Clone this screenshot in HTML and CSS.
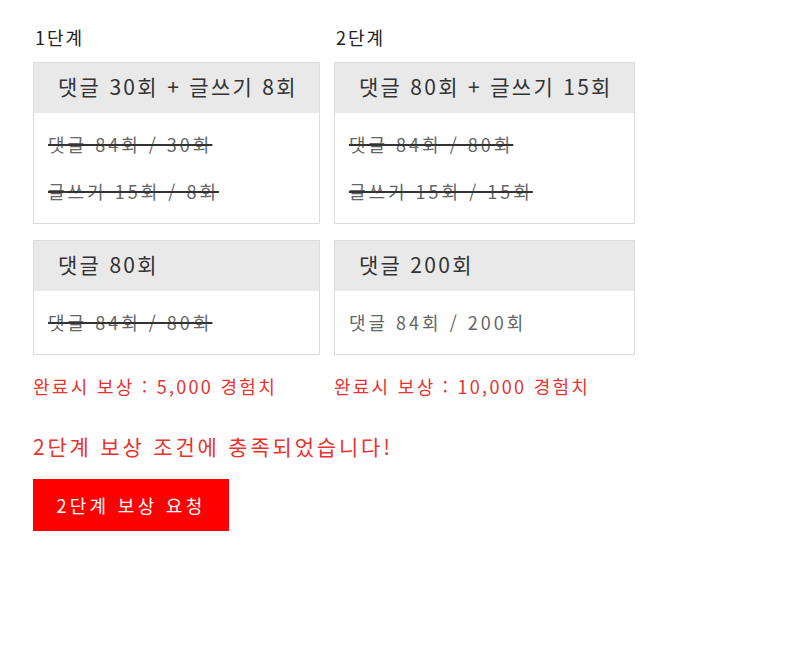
FILE: index.html
```html
<!DOCTYPE html>
<html lang="ko">
<head>
  <meta charset="UTF-8" />
  <meta name="viewport" content="width=device-width, initial-scale=1.0" />
  <title>단계별 보상</title>
  <link rel="stylesheet" href="styles.css">
</head>
<body>
  <div class="stages">
    <div class="stage">
      <div class="stage-title">1단계</div>
      <div class="mission">
        <div class="mission-head">댓글 30회 + 글쓰기 8회</div>
        <div class="mission-body">
          <p class="done">댓글 84회 / 30회</p>
          <p class="done">글쓰기 15회 / 8회</p>
        </div>
      </div>
      <div class="mission">
        <div class="mission-head">댓글 80회</div>
        <div class="mission-body">
          <p class="done">댓글 84회 / 80회</p>
        </div>
      </div>
      <div class="reward">완료시 보상 : 5,000 경험치</div>
    </div>

    <div class="stage">
      <div class="stage-title">2단계</div>
      <div class="mission">
        <div class="mission-head">댓글 80회 + 글쓰기 15회</div>
        <div class="mission-body">
          <p class="done">댓글 84회 / 80회</p>
          <p class="done">글쓰기 15회 / 15회</p>
        </div>
      </div>
      <div class="mission">
        <div class="mission-head">댓글 200회</div>
        <div class="mission-body">
          <p>댓글 84회 / 200회</p>
        </div>
      </div>
      <div class="reward">완료시 보상 : 10,000 경험치</div>
    </div>
  </div>

  <p class="notice">2단계 보상 조건에 충족되었습니다!</p>
  <button class="btn-request">2단계 보상 요청</button>
</body>
</html>
```

FILE: styles.css
```css
* {
  box-sizing: border-box;
}

body {
  margin: 0;
  padding: 24px 33px;
  font-family: "Noto Sans CJK KR", "Noto Sans", sans-serif;
  color: #222;
  background: #fff;
}

.stages {
  display: flex;
  align-items: flex-start;
  gap: 14px;
}

.stage {
  display: flex;
  flex-direction: column;
}

.stage-title {
  font-size: 18px;
  line-height: 26px;
  letter-spacing: 2px;
  margin: 0 0 12px 2px;
}

.mission {
  border: 1px solid #dcdcdc;
  margin-bottom: 16px;
}

.mission-head {
  background: #e9e9e9;
  color: #333;
  font-size: 21px;
  line-height: 47px;
  letter-spacing: 2.3px;
  padding: 0 21px 3px 24px;
  white-space: nowrap;
}

.mission-body {
  padding: 8px 14px;
}

.mission-body p {
  margin: 0;
  font-size: 18px;
  line-height: 47px;
  letter-spacing: 3px;
  color: #666;
}

.mission-body p.done {
  text-decoration: line-through;
  text-decoration-color: #333;
  text-decoration-thickness: 2px;
}

.reward {
  font-size: 18px;
  line-height: 30px;
  letter-spacing: 2.3px;
  color: #e8332f;
}

.notice {
  margin: 30px 0 18px;
  font-size: 21px;
  line-height: 30px;
  letter-spacing: 2.8px;
  color: #e8332f;
}

.btn-request {
  width: 196px;
  height: 52px;
  border: none;
  background: #ff0000;
  color: #fff;
  font-family: inherit;
  font-size: 18px;
  letter-spacing: 3.3px;
  cursor: pointer;
}
```
